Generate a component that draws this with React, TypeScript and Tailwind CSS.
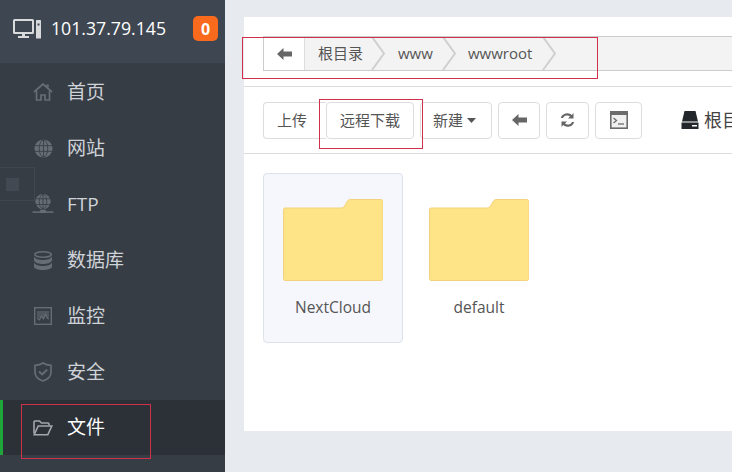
const font = "font-['Open_Sans','Noto_Sans_CJK_SC',sans-serif]";

function HomeIcon() {
  return (
    <svg width="20" height="18" viewBox="0 0 20 18" fill="none" stroke="#666d75" strokeWidth="1.7">
      <path d="M1 9 10 1l9 8" />
      <path d="M3.500 8V17h4.500v-5h4v5h4.500V8" />
      <path d="M14.500 1.500v3" strokeWidth="2.400" />
    </svg>
  );
}

function GlobeIcon() {
  return (
    <svg width="19" height="19" viewBox="0 0 20 20" fill="none" stroke="#3a424b" strokeWidth="1">
      <circle cx="10" cy="10" r="9.500" fill="#666d75" stroke="none" />
      <ellipse cx="10" cy="10" rx="4.500" ry="9" />
      <path d="M10 1v18M1 7h18M1 13h18" />
    </svg>
  );
}

function FtpIcon() {
  return (
    <svg width="22" height="20" viewBox="0 0 22 21" fill="none" stroke="#3a424b" strokeWidth="1">
      <circle cx="11" cy="8" r="8" fill="#666d75" stroke="none" />
      <ellipse cx="11" cy="8" rx="4" ry="7.500" />
      <path d="M11 0v16M3 5h16M3 11h16" />
      <path d="M0 19h22" stroke="#666d75" strokeWidth="1.600" />
      <rect x="8" y="16.500" width="6" height="3.500" fill="#666d75" stroke="none" />
    </svg>
  );
}

function DatabaseIcon() {
  return (
    <svg width="18" height="19" viewBox="0 0 18 19" fill="#666d75">
      <path d="M9 0.800c4.400 0 8.200 1.200 8.200 2.700S13.400 6.200 9 6.200 0.800 5 0.800 3.500 4.600 0.800 9 0.800z" fill="none" stroke="#666d75" strokeWidth="1.600" />
      <path d="M0 5.500c1 2.500 5 3.500 9 3.500s8-1 9-3.500V9.500c-1 2.500-5 3.500-9 3.500S1 12 0 9.500z" />
      <path d="M0 11.500c1 2.500 5 3.500 9 3.500s8-1 9-3.500V15.500C18 17.500 14 19 9 19s-9-1.500-9-3.500z" />
    </svg>
  );
}

function MonitorIcon() {
  return (
    <svg width="18" height="18" viewBox="0 0 18 18" fill="none" stroke="#666d75" strokeWidth="1.400">
      <rect x="0.700" y="0.700" width="16.600" height="16.600" />
      <path d="M3 4h12v5.500l-1.500 2-1.500-4-2.500 5-2-3-1.500 2-3-1.500z" fill="#666d75" fillOpacity="0.55" stroke="none" />
      <path d="M3 11l2.500 2 2-4 2 3 2-5 1.500 4 2 1" strokeWidth="1.100" />
    </svg>
  );
}

function ShieldIcon() {
  return (
    <svg width="18" height="20" viewBox="0 0 18 20" fill="none" stroke="#666d75" strokeWidth="1.700">
      <path d="M9 1c2 1.500 5 2.300 8 2.300V10c0 4.500-4 7.700-8 9-4-1.300-8-4.500-8-9V3.300C4 3.300 7 2.500 9 1z" />
      <path d="M5 9.500l3.200 3 5-5" strokeWidth="1.900" />
    </svg>
  );
}

function OpenFolderIcon() {
  return (
    <svg width="20" height="16" viewBox="0 0 20 16" fill="none" stroke="#a3a6aa" strokeWidth="1.600">
      <path d="M1 13.500V2a1 1 0 0 1 1-1h4.500l2 2H15a1 1 0 0 1 1 1v1.500" />
      <path d="M1.200 14.700h13.600l4-8.700H5.200z" />
    </svg>
  );
}

function ServerIcon() {
  return (
    <svg width="28" height="20" viewBox="0 0 28 20" fill="#d8dadc">
      <rect x="1" y="1" width="19" height="13" fill="none" stroke="#d8dadc" strokeWidth="2" rx="0.500" />
      <path d="M5 17h11v2H5z" />
      <rect x="9" y="14" width="3" height="3" />
      <rect x="23" y="1" width="5" height="18.500" rx="0.500" />
      <rect x="24.500" y="4.500" width="2" height="2" fill="#3d4651" />
    </svg>
  );
}

function BackArrow() {
  return (
    <svg width="15" height="12" viewBox="0 0 15 12" fill="#666">
      <path d="M0 6 6.500 0V3.500H15V8.500H6.500V12z" />
    </svg>
  );
}

function RefreshIcon() {
  return (
    <svg width="15" height="16" viewBox="0 0 15 16" fill="#666">
      <path d="M13.500 1v5.500H8l2-2A4.500 4.500 0 0 0 3 6H0.800A6.700 6.700 0 0 1 11.800 3z" />
      <path d="M1.500 15V9.500H7l-2 2A4.500 4.500 0 0 0 12 10h2.200A6.700 6.700 0 0 1 3.200 13z" />
    </svg>
  );
}

function TerminalIcon() {
  return (
    <svg width="18" height="18" viewBox="0 0 18 18" fill="none">
      <rect x="0.800" y="0.800" width="16.400" height="16.400" fill="#f1f1f1" stroke="#6c6c6c" strokeWidth="1.600" />
      <rect x="1" y="1" width="16" height="3" fill="#6c6c6c" />
      <path d="M3.500 7l3 2.500-3 2.500" stroke="#6c6c6c" strokeWidth="1.300" />
      <path d="M8 13h6" stroke="#6c6c6c" strokeWidth="1.300" />
    </svg>
  );
}

function DiskIcon() {
  return (
    <svg width="18" height="18" viewBox="0 0 18 18" fill="#23262b">
      <path d="M3.500 0h11L17 10.500H1z" />
      <path d="M0.500 11.500h17V18H0.500z" />
      <path d="M11 14h5v1.500h-5z" fill="#fff" />
    </svg>
  );
}

function Folder() {
  return (
    <svg width="100" height="82" viewBox="0 0 100 82">
      <path
        d="M2 9h56c1.500 0 2.500-.5 3.500-2l3-5c1-1.300 2-1.500 3.500-1.500h30c1 0 2 1 2 2V79.500c0 1-1 2-2 2H2c-1 0-1.500-1-1.500-2V10.500c0-1 .5-1.500 1.500-1.500z"
        fill="#ffe387"
        stroke="#f2d27c"
      />
    </svg>
  );
}

const menu = [
  { label: '首页', icon: <HomeIcon /> },
  { label: '网站', icon: <GlobeIcon /> },
  { label: 'FTP', icon: <FtpIcon /> },
  { label: '数据库', icon: <DatabaseIcon /> },
  { label: '监控', icon: <MonitorIcon /> },
  { label: '安全', icon: <ShieldIcon /> },
];

function Crumb({ label, className }: { label: string; className: string }) {
  return (
    <div className={`relative flex h-full items-center ${className}`}>
      <span>{label}</span>
      <svg className="absolute right-0 top-0" width="14" height="33" viewBox="0 0 14 33" fill="none">
        <path d="M1 0 13 16.500 1 33" stroke="#cfcfcf" strokeWidth="2" />
      </svg>
    </div>
  );
}

const btn = 'flex h-[37px] items-center justify-center rounded border border-[#ddd] bg-white text-[15px] text-[#555]';

export default function App() {
  return (
    <div className={`relative flex h-[472px] w-[732px] overflow-hidden bg-[#e7eaef] ${font}`}>
      <aside className="relative w-[225px] shrink-0 bg-[#363d45]">
        <div className="flex h-[63px] items-center bg-[#3d4651] pb-[6px] pl-[13px] pr-[7px]">
          <ServerIcon />
          <span className="ml-[10px] text-[17.700px] text-white">101.37.79.145</span>
          <span className="ml-auto flex h-[25px] w-[25px] items-center justify-center rounded-[5px] bg-[#f96a1d] text-[16px] font-bold text-white">0</span>
        </div>
        <nav className="pt-[1px]">
          {menu.map(item => (
            <div key={item.label} className="flex h-[56px] items-center">
              <div className="flex w-[67px] justify-center pl-[21px] pr-[2px]">{item.icon}</div>
              <span className="text-[19px] text-[#cfd3d8]">{item.label}</span>
            </div>
          ))}
          <div className="flex h-[55px] items-center border-l-[3px] border-[#20a53a] bg-[#2c3138]">
            <div className="flex w-[64px] justify-center pl-[18px] pr-[2px]">
              <OpenFolderIcon />
            </div>
            <span className="text-[19px] text-white">文件</span>
          </div>
        </nav>
        <div className="absolute left-0 top-[167px] flex h-[34px] w-[35px] items-center border border-l-0 border-[#3f464e] pl-[6px]">
          <div className="h-[13px] w-[13px] bg-[#424952]" />
        </div>
      </aside>

      <main className="min-w-0 flex-1 pl-[19px] pt-[17px]">
        <div className="h-[414px] w-[600px] bg-white">
          <div className="border-b border-[#ddd] pb-[15px] pl-[19px] pt-[19px]">
            <div className="flex h-[35px] items-center border-y border-l border-[#ccc] bg-[#f3f3f3] text-[15px] text-[#555]">
              <div className="flex h-full w-[41px] items-center justify-center border-r border-[#ddd] bg-white">
                <BackArrow />
              </div>
              <Crumb label="根目录" className="w-[80px] pl-[13px]" />
              <Crumb label="www" className="w-[71px] pl-[13px]" />
              <Crumb label="wwwroot" className="w-[100px] pl-[12px]" />
            </div>
          </div>
          <div className="flex h-[67px] items-center border-b border-[#ddd] pl-[19px]">
            <div className={`${btn} w-[63px] justify-start rounded-r-none border-r-0 pl-[13px]`}>上传</div>
            <div className={`${btn} w-[88px]`}>远程下载</div>
            <div className={`${btn} ml-[6px] w-[72px] justify-start gap-[4px] pl-[12px]`}>
              <span>新建</span>
              <svg width="9" height="5" viewBox="0 0 9 5"><path d="M0 0h9L4.500 5z" fill="#555" /></svg>
            </div>
            <div className={`${btn} ml-[6px] w-[42px]`}>
              <BackArrow />
            </div>
            <div className={`${btn} ml-[6px] w-[43px]`}><RefreshIcon /></div>
            <div className={`${btn} ml-[6px] w-[47px]`}><TerminalIcon /></div>
            <div className="ml-[39px] flex items-center gap-[5px] whitespace-nowrap text-[18px] text-[#444]">
              <DiskIcon />
              <span>根目录</span>
            </div>
          </div>
          <div className="flex pl-[19px] pt-[19px]">
            <div className="flex h-[170px] w-[140px] flex-col items-center rounded-sm border border-[#dde1ea] bg-[#f6f7fc] pt-[25px]">
              <Folder />
              <span className="mt-[15px] text-[15.500px] text-[#555]">NextCloud</span>
            </div>
            <div className="ml-[6px] flex h-[170px] w-[140px] flex-col items-center pt-[26px]">
              <Folder />
              <span className="mt-[15px] text-[15.500px] text-[#555]">default</span>
            </div>
          </div>
        </div>
      </main>

      <div className="absolute left-[242px] top-[37px] h-[42px] w-[356px] border border-[#d0304a]" />
      <div className="absolute left-[319px] top-[99px] h-[50px] w-[104px] border border-[#d0304a]" />
      <div className="absolute left-[21px] top-[404px] h-[55px] w-[130px] border border-[#d0304a]" />
    </div>
  );
}
